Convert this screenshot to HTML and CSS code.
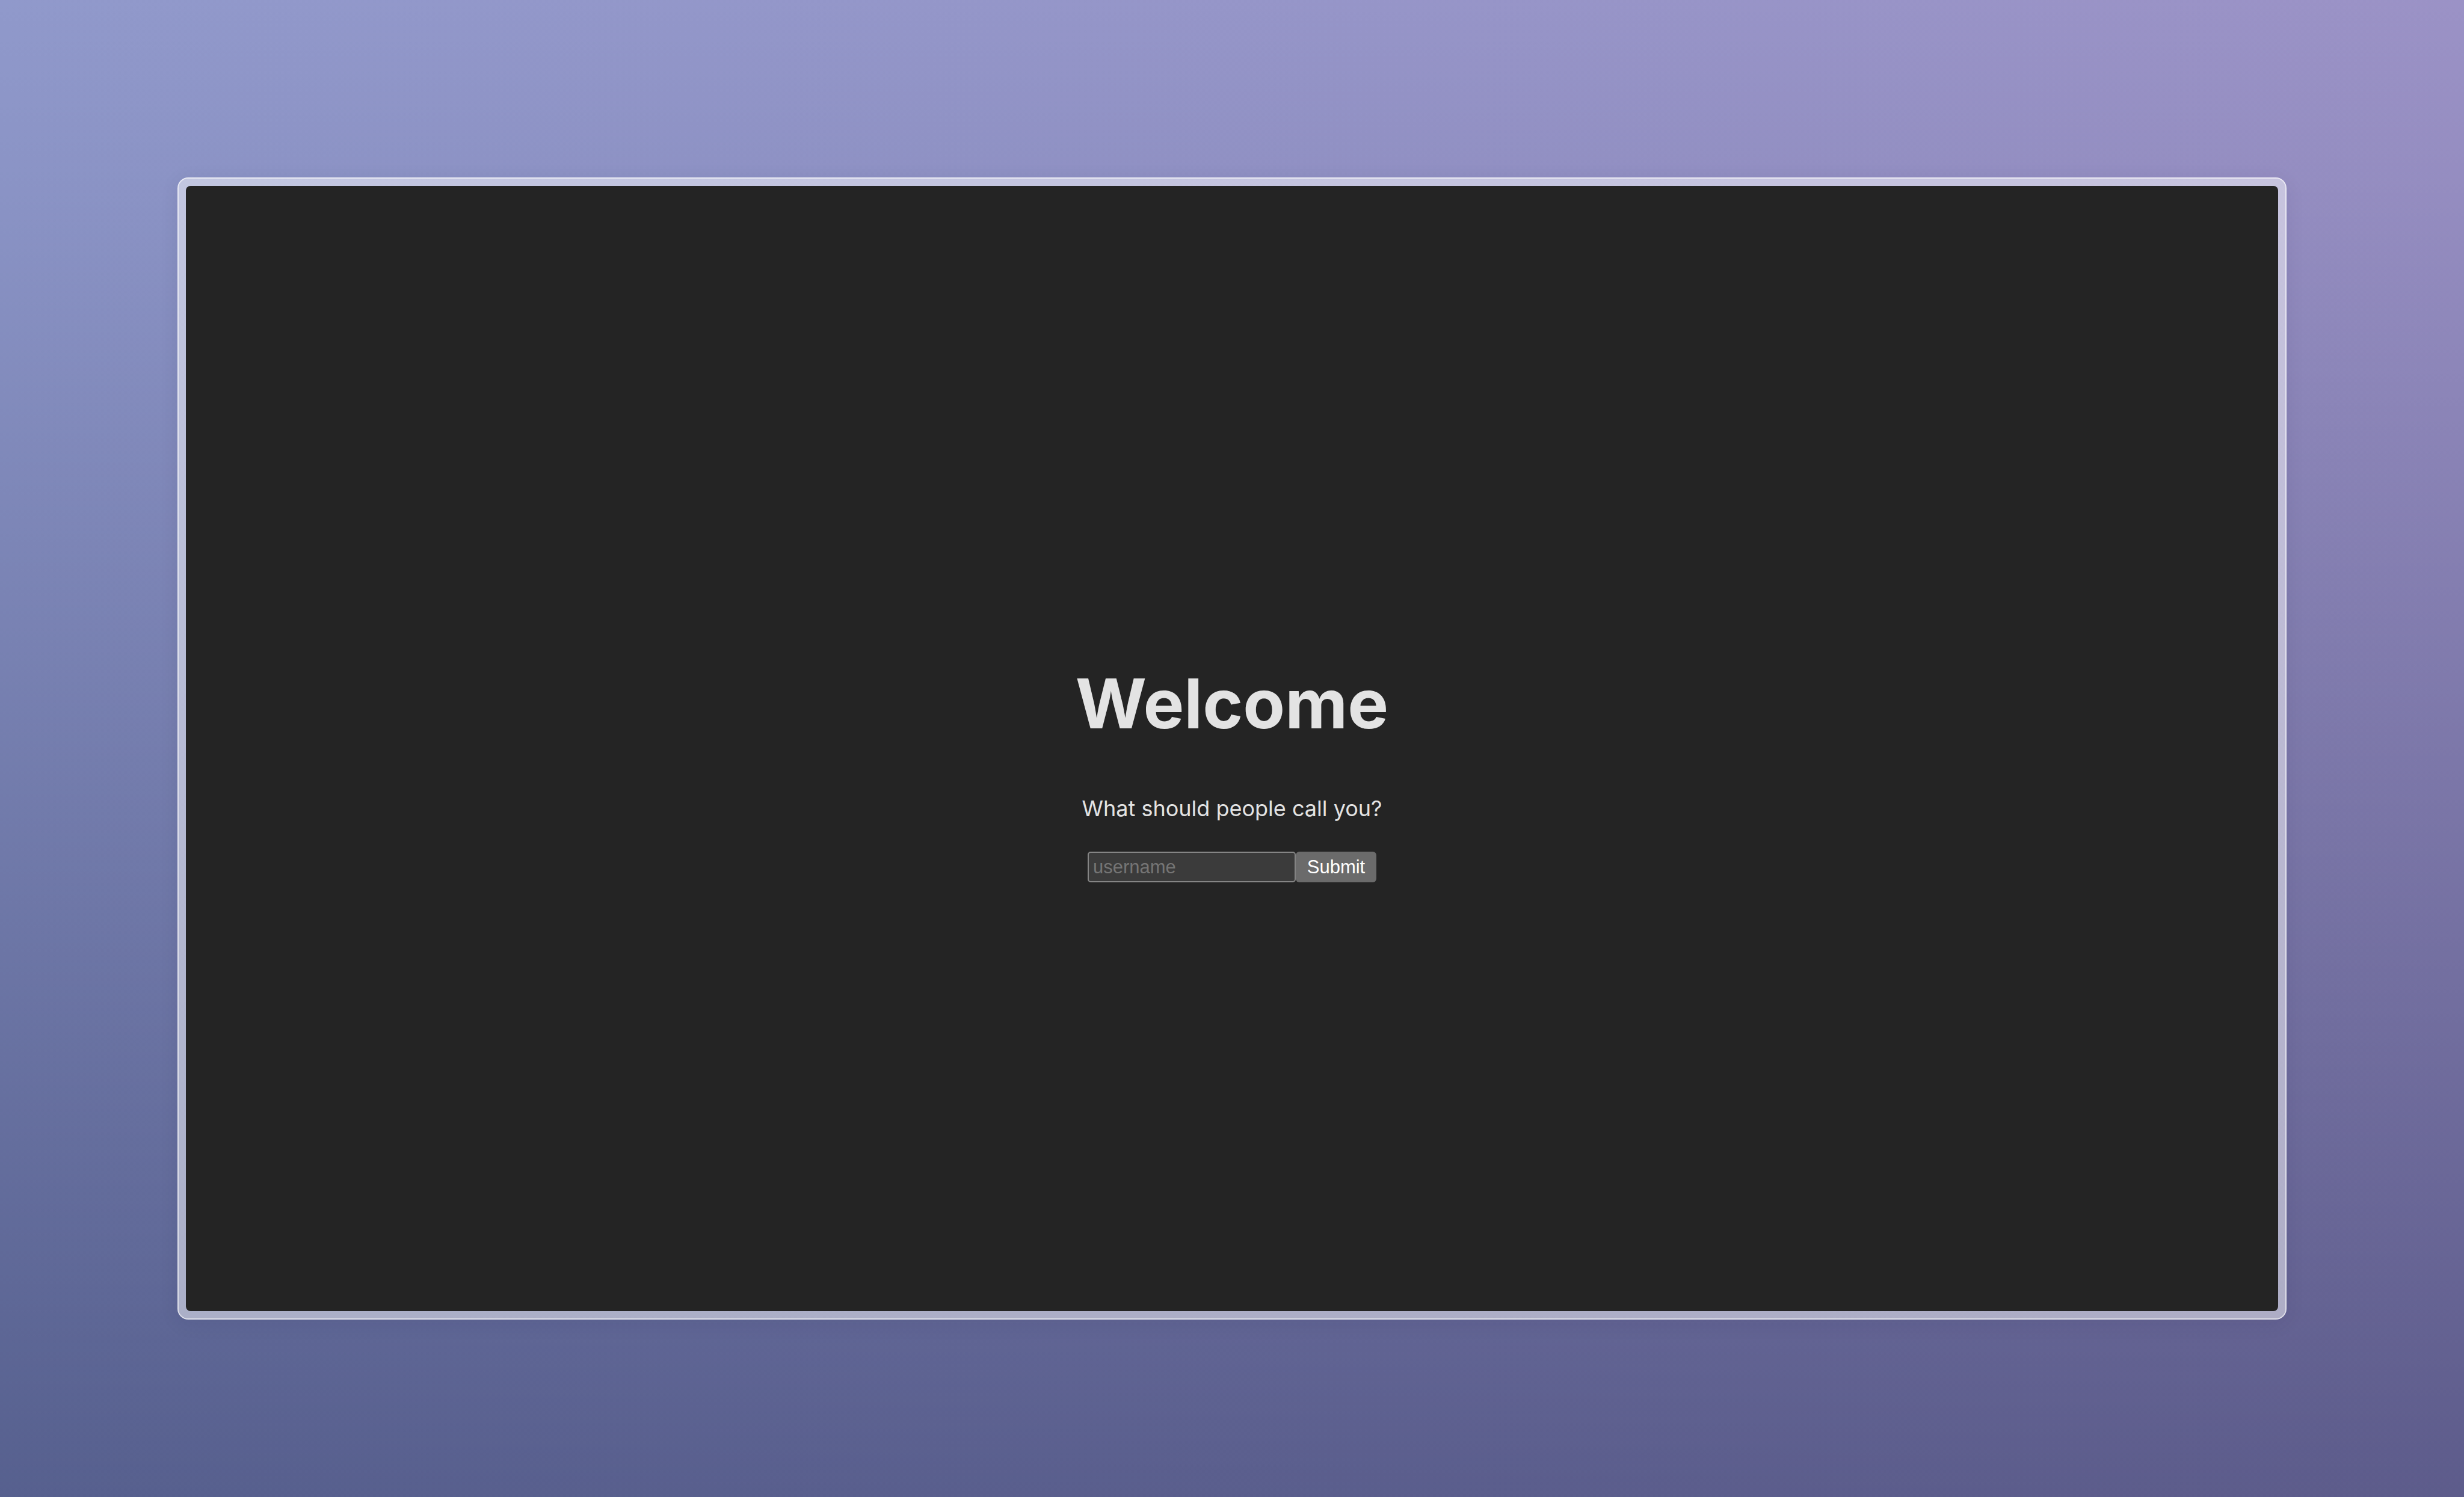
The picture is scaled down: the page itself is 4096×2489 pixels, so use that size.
FILE: index.html
```html
<!DOCTYPE html>
<html lang="en">
<head>
<meta charset="utf-8">
<title>Welcome</title>
<link rel="stylesheet" href="styles.css">
</head>
<body>
<main class="window">
  <section class="screen">
    <h1 class="title">Welcome</h1>
    <form class="join">
      <label class="prompt" for="username">What should people call you?</label>
      <div class="row">
        <input class="field" id="username" type="text" placeholder="username">
        <button class="submit" type="submit">Submit</button>
      </div>
    </form>
  </section>
</main>
</body>
</html>
```
FILE: styles.css
```css
* {
  box-sizing: border-box;
}

body {
  margin: 0;
  min-height: 100vh;
  padding: 295px;
  display: flex;
  font-family: Inter, "Liberation Sans", sans-serif;
  color: #e3e3e3;
  background:
    linear-gradient(to bottom, #fff 0%, #f5f6f8 12%, #99a0b3 100%),
    linear-gradient(to right, #9099cb, #9b92c6);
  background-blend-mode: multiply;
}

.window {
  flex: 1;
  display: flex;
  padding: 12px;
  border: 2px solid rgba(255, 255, 255, 0.8);
  border-radius: 18px;
  background: rgba(255, 255, 255, 0.48);
  background-clip: padding-box;
  box-shadow: 0 6px 32px rgba(20, 20, 60, 0.08);
}

.screen {
  flex: 1;
  display: flex;
  flex-direction: column;
  align-items: center;
  justify-content: center;
  border-radius: 8px;
  background: #242424;
}

.title {
  margin: 82px 0 80px;
  font-size: 114px;
  line-height: 132px;
  font-weight: 700;
}

.join {
  display: flex;
  flex-direction: column;
  align-items: center;
  gap: 44px;
}

.prompt {
  font-size: 36px;
  line-height: 56px;
}

.row {
  display: flex;
}

.field,
.submit {
  height: 51px;
  margin: 0;
  font-family: "Liberation Sans", Arial, sans-serif;
  font-size: 31px;
}

.field {
  width: 346px;
  padding: 0 7px;
  border: 2px solid #858585;
  border-radius: 5px;
  background: #3b3b3b;
  color: #fff;
}

.field::placeholder {
  color: #757575;
  opacity: 1;
}

.submit {
  width: 134px;
  padding: 0;
  border: 0;
  border-radius: 6px;
  background: #6b6b6b;
  color: #fff;
}
```
